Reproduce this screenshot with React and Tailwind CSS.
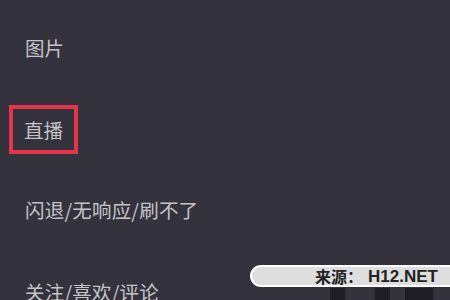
import React from "react";

const font = { fontFamily: '"Noto Sans CJK SC", "Noto Sans", sans-serif' };

export default function App() {
  return (
    <div
      className="relative w-[450px] h-[300px] overflow-hidden bg-[#34323c] text-[#c4c4c8]"
      style={font}
    >
      <div className="flex flex-col pl-[25px] pt-[37px] text-[19.5px] leading-[22px]">
        <div className="h-[82px]">图片</div>
        <div className="h-[82px]">
          <span className="inline-block -ml-[16px] -mt-[15px] border-[4px] border-[#e6354a] px-[11px] pt-[10px] pb-[9px]">
            直播
          </span>
        </div>
        <div className="h-[82px] -mt-[2px] tracking-[0.2px]">闪退/无响应/刷不了</div>
        <div className="h-[82px] tracking-[0.2px]">关注/喜欢/评论</div>
      </div>

      <div className="absolute left-[330px] top-[288px] w-[15px] h-[12px] bg-[#1e1d24]" />
      <div className="absolute left-[375px] top-[288px] w-[15px] h-[12px] bg-[#1e1d24]" />
      <div className="absolute left-[405px] top-[288px] w-[28px] h-[12px] bg-[#1e1d24]" />

      <div className="absolute left-[250px] top-[265px] w-[210px] h-[22px] rounded-l-full bg-[#dedede] border-2 border-white flex items-center pl-[63px]">
        <span className="text-[16px] font-bold text-[#222] leading-none">来源：</span>
        <span
          className="ml-[5px] text-[17px] font-semibold text-[#222] leading-none"
          style={{ fontFamily: '"Liberation Sans", Arial, sans-serif' }}
        >
          H12.NET
        </span>
      </div>
    </div>
  );
}
